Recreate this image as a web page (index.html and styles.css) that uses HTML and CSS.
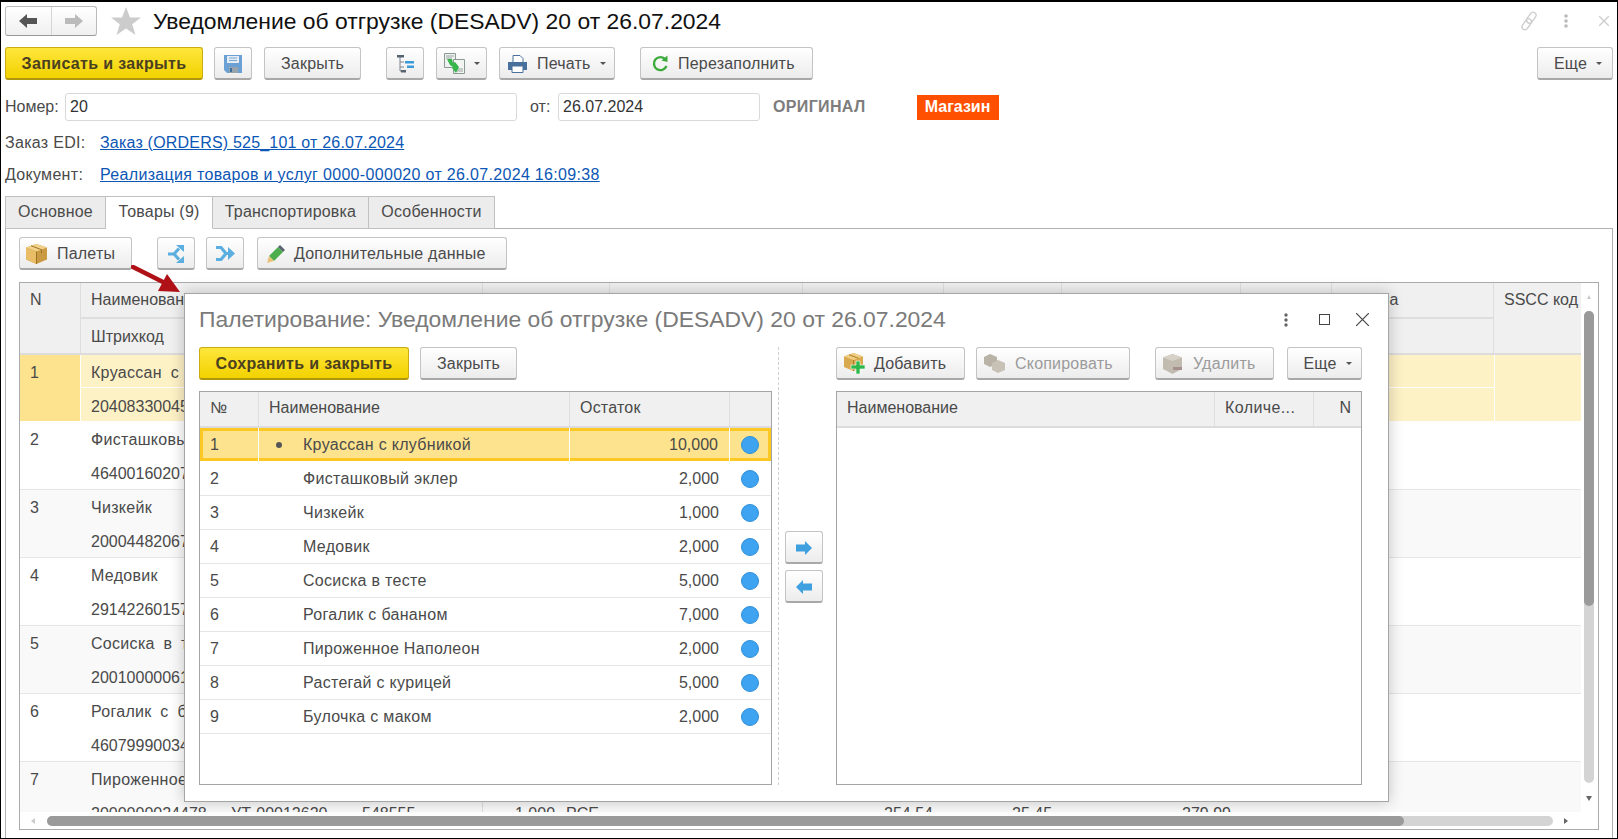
FILE: index.html
```html
<!DOCTYPE html>
<html lang="ru">
<head>
    <meta charset="UTF-8">
    <title>Уведомление об отгрузке (DESADV) 20 от 26.07.2024</title>
    <link rel="stylesheet" href="styles.css">
</head>
<body>
<div class="window">
    <div class="titlebar">
        <div class="nav">
            <div class="nav-part"><svg width="18" height="14" viewBox="0 0 18 14"><path d="M0 7 8 0v4h10v6H8v4z" fill="#555"/></svg></div>
            <div class="nav-part"><svg width="18" height="14" viewBox="0 0 18 14"><path d="M18 7 10 0v4H0v6h10v4z" fill="#bbb"/></svg></div>
        </div>
        <svg class="star" width="30" height="28" viewBox="0 0 30 28"><path d="M15 0l4 10.500h11l-8.800 6.700L24.500 28 15 21.400 5.500 28l3.300-10.800L0 10.500h11z" fill="#ccc"/></svg>
        <div class="doc-title">Уведомление об отгрузке (DESADV) 20 от 26.07.2024</div>
        <div class="win-icons">
            <svg width="20" height="20" viewBox="0 0 20 20" fill="none" stroke="#ccc" stroke-width="1.300"><rect x="-1" y="7" width="12" height="6" rx="3" transform="rotate(-55 10 10) translate(1 0)"/><rect x="9" y="7" width="12" height="6" rx="3" transform="rotate(-55 10 10) translate(-1 0)"/></svg>
            <svg class="dots" width="4" height="14" viewBox="0 0 4 14" fill="#bbb"><circle cx="2" cy="2" r="1.800"/><circle cx="2" cy="7" r="1.800"/><circle cx="2" cy="12" r="1.800"/></svg>
            <svg class="close-x" width="10" height="10" viewBox="0 0 10 10" stroke="#ccc" stroke-width="1.300"><path d="M0 0l10 10M10 0 0 10"/></svg>
        </div>
    </div>

    <div class="toolbar">
        <button class="btn btn-yellow w-write">Записать и закрыть</button>
        <button class="btn w-icon ml-11"><svg width="18" height="18" viewBox="0 0 18 18"><path d="M0 0h18v18H3l-3-3z" fill="#6aa0d4"/><path d="M3 1h12v7H3z" fill="#e4edf6"/><path d="M5 3h8M5 5.500h8" stroke="#7ba6cf"/><path d="M5 12h9v6H5z" fill="#98a3ad"/><path d="M6 13h2v4H6z" fill="#3d6f9d"/></svg></button>
        <button class="btn w-close ml-12">Закрыть</button>
        <button class="btn w-icon ml-25"><svg width="18" height="18" viewBox="0 0 18 18"><path d="M4 2v14h4M4 7h4M4 12h4" stroke="#7a8590" fill="none"/><path d="M1 0h7v2.500H1zM5 15h5v2.500H5z" fill="#56636e"/><path d="M9 6h9v2.500H9zM11 10.500h7V13h-7z" fill="#3b9ad8"/></svg></button>
        <button class="btn w-copy ml-12"><svg width="21" height="21" viewBox="0 0 21 21"><path d="M.5.5h11v14H.5z" fill="#eef1f0" stroke="#8a9a92"/><path d="M9.500 6.500h11v14h-11z" fill="#f3f5f3" stroke="#8a9a92"/><path d="M2 3h8M2 5h6M13 16h6M13 18h6" stroke="#9aa5a0"/><path d="M3 6h5l1 4 2-1 4 5-3 6-4-5 1-1-3-2z" fill="#35b54a"/></svg><span class="caret"></span></button>
        <button class="btn left w-print"><svg width="19" height="18" viewBox="0 0 19 18"><path d="M5 .5h7l3 3V8H5z" fill="#fff" stroke="#4a7199"/><path d="M0 7h19v8H0z" fill="#47719c"/><path d="M4 11h11v6.500H4z" fill="#fff" stroke="#4a7199"/></svg><span class="btn-text">Печать</span><span class="caret"></span></button>
        <button class="btn left w-refill"><svg width="16" height="18" viewBox="0 0 16 18" fill="none"><path d="M13.500 4.500A6.500 6.500 0 1 0 14.500 11" stroke="#3cab3c" stroke-width="2.400"/><path d="M9.500 5.500 15.500 7V0.500z" fill="#3cab3c"/></svg><span class="btn-text">Перезаполнить</span></button>
        <button class="btn w-more ml-auto">Еще<span class="caret"></span></button>
    </div>

    <div class="form-row">
        <label class="lbl-num">Номер:</label>
        <div class="field f-num">20</div>
        <label class="lbl-from">от:</label>
        <div class="field f-date">26.07.2024</div>
        <span class="original">ОРИГИНАЛ</span>
        <span class="shop-tag">Магазин</span>
    </div>
    <div class="link-row first"><span class="link-lbl">Заказ EDI:</span><a class="link-a" href="#">Заказ (ORDERS) 525_101 от 26.07.2024</a></div>
    <div class="link-row"><span class="link-lbl">Документ:</span><a class="link-b" href="#">Реализация товаров и услуг 0000-000020 от 26.07.2024 16:09:38</a></div>

    <div class="tabs">
        <div class="tab t1">Основное</div>
        <div class="tab t2 active">Товары (9)</div>
        <div class="tab t3">Транспортировка</div>
        <div class="tab t4">Особенности</div>
    </div>

    <div class="panel">
        <div class="toolbar inner">
            <button class="btn left w-pallets"><svg width="21" height="20" viewBox="0 0 21 20"><path d="M10.500 0 21 3.500v12L10.500 20 0 15.500v-12z" fill="#c99a42"/><path d="M10.500 0 21 3.500 10.500 7.500 0 3.500z" fill="#f2d28a"/><path d="M10.500 7.500V20L0 15.500v-12z" fill="#e8bd66"/><path d="M5 1.700 15.500 5.700v3.500M10.500 7.500V20" stroke="#9c7228" fill="none"/></svg><span class="btn-text">Палеты</span></button>
            <button class="btn w-icon ml-25"><svg width="19" height="18" viewBox="0 0 19 18" fill="none" stroke="#5aaee0" stroke-width="3.200"><path d="M1 9h6l5-5.500M7 9l5 5.500"/><path d="M9 0h8v7zM9 18h8v-7z" fill="#5aaee0" stroke="none"/></svg></button>
            <button class="btn w-icon ml-11"><svg width="19" height="17" viewBox="0 0 19 17" fill="none" stroke="#5aaee0" stroke-width="3.200"><path d="M0 2.500h5l5 6h3M0 14.500h5l5-6"/><path d="M12 2l7 6.500-7 6.500z" fill="#5aaee0" stroke="none"/></svg></button>
            <button class="btn left w-extra ml-13"><svg width="18" height="18" viewBox="0 0 18 18"><path d="M2 11 11 2l5 5-9 9z" fill="#4cae4c"/><path d="M11 2l2-2 5 5-2 2z" fill="#56636e"/><path d="M2 11l5 5-7 2z" fill="#e8c27a"/></svg><span class="btn-text tight">Дополнительные данные</span></button>
        </div>

        <div class="grid-main">
            <div class="grid-top">
                <div class="grid-content">
                    <div class="head">
                        <div class="hcell h-n">N</div>
                        <div class="head-group">
                            <div class="head-line top">
                                <div class="hcell c0">Наименование</div><div class="hcell c1"></div><div class="hcell c2"></div><div class="hcell c3"></div><div class="hcell c4"></div><div class="hcell c5"></div><div class="hcell c6"></div><div class="hcell c7">Сумма</div>
                            </div>
                            <div class="head-line"><div class="hcell">Штрихкод</div></div>
                        </div>
                        <div class="hcell h-sscc">SSCC код</div>
                    </div>

                    <div class="rows">
                        <div class="row current">
                            <div class="row-n">1</div>
                            <div class="row-lines">
                                <div class="line">Круассан с клубникой</div>
                                <div class="line">20408330045</div>
                            </div>
                            <div class="row-sscc"></div>
                        </div>
                        <div class="row">
                            <div class="row-n">2</div>
                            <div class="row-lines"><div class="line">Фисташковый эклер</div><div class="line">46400160207</div></div>
                        </div>
                        <div class="row alt">
                            <div class="row-n">3</div>
                            <div class="row-lines"><div class="line">Чизкейк</div><div class="line">20004482067</div></div>
                        </div>
                        <div class="row">
                            <div class="row-n">4</div>
                            <div class="row-lines"><div class="line">Медовик</div><div class="line">29142260157</div></div>
                        </div>
                        <div class="row alt">
                            <div class="row-n">5</div>
                            <div class="row-lines"><div class="line">Сосиска в тесте</div><div class="line">20010000061</div></div>
                        </div>
                        <div class="row">
                            <div class="row-n">6</div>
                            <div class="row-lines"><div class="line">Рогалик с бананом</div><div class="line">46079990034</div></div>
                        </div>
                        <div class="row alt">
                            <div class="row-n">7</div>
                            <div class="row-lines">
                                <div class="line">Пироженное Наполеон</div>
                                <div class="line cells">
                                    <span class="v-bar">2000000024478</span><span class="v-art">УТ-00012620</span><span class="v-code">548555</span><span class="v-qty">1,000</span><span class="v-unit">PCE</span><span class="v-price">254,54</span><span class="v-vat">25,45</span><span>279,99</span>
                                </div>
                            </div>
                        </div>
                    </div>
                </div>
                <div class="vscroll">
                    <span class="arr-up"></span>
                    <div class="vtrack"><div class="vthumb"></div></div>
                    <span class="arr-down"></span>
                </div>
            </div>
            <div class="hscroll">
                <span class="arr-left"></span>
                <div class="htrack"><div class="hthumb"></div></div>
                <span class="arr-right"></span>
            </div>
        </div>
    </div>

    <svg class="pointer" width="52" height="30" viewBox="0 0 52 30"><path d="M2 2 32 17" stroke="#b01116" stroke-width="4.500" stroke-linecap="round"/><path d="M49 27 27 26 36 9z" fill="#b01116"/></svg>

    <div class="dialog">
        <div class="dlg-head">
            <div class="dlg-title">Палетирование: Уведомление об отгрузке (DESADV) 20 от 26.07.2024</div>
            <svg class="dlg-dots" width="4" height="14" viewBox="0 0 4 14" fill="#666"><circle cx="2" cy="2" r="1.700"/><circle cx="2" cy="7" r="1.700"/><circle cx="2" cy="12" r="1.700"/></svg>
            <span class="dlg-max"></span>
            <svg class="dlg-x" width="13" height="13" viewBox="0 0 13 13" stroke="#444" stroke-width="1.200"><path d="M0 0l13 13M13 0 0 13"/></svg>
        </div>
        <div class="dlg-body">
            <div class="dlg-left">
                <div class="toolbar dlg-bar">
                    <button class="btn btn-yellow w-save">Сохранить и закрыть</button>
                    <button class="btn w-dlg-close ml-11">Закрыть</button>
                </div>
                <div class="list">
                    <div class="list-row list-head">
                        <div class="lc-n">№</div><div class="lc-name plain">Наименование</div><div class="lc-rest plain">Остаток</div><div class="lc-dot"></div>
                    </div>
                    <div class="list-row sel"><div class="lc-n">1</div><div class="lc-name"><i class="marker on"></i>Круассан с клубникой</div><div class="lc-rest">10,000</div><div class="lc-dot"><i class="dot"></i></div></div>
                    <div class="list-row"><div class="lc-n">2</div><div class="lc-name"><i class="marker"></i>Фисташковый эклер</div><div class="lc-rest">2,000</div><div class="lc-dot"><i class="dot"></i></div></div>
                    <div class="list-row"><div class="lc-n">3</div><div class="lc-name"><i class="marker"></i>Чизкейк</div><div class="lc-rest">1,000</div><div class="lc-dot"><i class="dot"></i></div></div>
                    <div class="list-row"><div class="lc-n">4</div><div class="lc-name"><i class="marker"></i>Медовик</div><div class="lc-rest">2,000</div><div class="lc-dot"><i class="dot"></i></div></div>
                    <div class="list-row"><div class="lc-n">5</div><div class="lc-name"><i class="marker"></i>Сосиска в тесте</div><div class="lc-rest">5,000</div><div class="lc-dot"><i class="dot"></i></div></div>
                    <div class="list-row"><div class="lc-n">6</div><div class="lc-name"><i class="marker"></i>Рогалик с бананом</div><div class="lc-rest">7,000</div><div class="lc-dot"><i class="dot"></i></div></div>
                    <div class="list-row"><div class="lc-n">7</div><div class="lc-name"><i class="marker"></i>Пироженное Наполеон</div><div class="lc-rest">2,000</div><div class="lc-dot"><i class="dot"></i></div></div>
                    <div class="list-row"><div class="lc-n">8</div><div class="lc-name"><i class="marker"></i>Растегай с курицей</div><div class="lc-rest">5,000</div><div class="lc-dot"><i class="dot"></i></div></div>
                    <div class="list-row"><div class="lc-n">9</div><div class="lc-name"><i class="marker"></i>Булочка с маком</div><div class="lc-rest">2,000</div><div class="lc-dot"><i class="dot"></i></div></div>
                </div>
            </div>
            <div class="dlg-divider"></div>
            <div class="dlg-arrows">
                <button class="btn w-arrow"><svg width="16" height="14" viewBox="0 0 16 14"><path d="M16 7 9 0v3.500H0v7h9V14z" fill="#3fa0e0"/></svg></button>
                <button class="btn w-arrow"><svg width="16" height="14" viewBox="0 0 16 14"><path d="M0 7l7-7v3.500h9v7H7V14z" fill="#3fa0e0"/></svg></button>
            </div>
            <div class="dlg-right">
                <div class="toolbar dlg-bar">
                    <button class="btn left w-add"><svg width="21" height="21" viewBox="0 0 21 21"><path d="M9.500 0 19 3.500V14l-9.500 4L0 14V3.500z" fill="#d8a94e"/><path d="M9.500 0 19 3.500 9.500 7 0 3.500z" fill="#f0cd80"/><path d="M9.500 7v11M5 1.700l9.500 3.600" stroke="#a87c2c" fill="none"/><path d="M12 8h4v4h5v4h-5v5h-4v-5H7v-4h5z" fill="#2fb84a" stroke="#fff" stroke-width=".6"/></svg><span class="btn-text tight">Добавить</span></button>
                    <button class="btn left w-dup off"><svg width="21" height="19" viewBox="0 0 21 19" fill="#b9b2a6"><path d="M6 0l7 3v7l-7 3-6-3V3z"/><path d="M14 6l7 3v7l-7 3-6-3V9z" fill="#c7c1b6"/></svg><span class="btn-text">Скопировать</span></button>
                    <button class="btn left w-del off"><svg width="20" height="20" viewBox="0 0 20 20"><path d="M9.500 0 19 3.500V15l-9.500 5L0 15V3.500z" fill="#c2bcb0"/><path d="M9.500 0 19 3.500 9.500 7 0 3.500z" fill="#d6d1c8"/><path d="M10 13h9v3h-9z" fill="#a58f8f"/></svg><span class="btn-text">Удалить</span></button>
                    <button class="btn w-more-dlg ml-13">Еще<span class="caret"></span></button>
                </div>
                <div class="list">
                    <div class="list-row list-head goods">
                        <div class="rc-name">Наименование</div><div class="rc-qty">Количе...</div><div class="rc-n">N</div>
                    </div>
                </div>
            </div>
        </div>
    </div>
</div>
</body>
</html>
```

FILE: styles.css
```css
* {
    box-sizing: border-box;
}

body {
    margin: 0;
    font-family: "Liberation Sans", Arial, sans-serif;
    font-size: 16px;
    color: #4a4a4a;
    background-color: #fff;
}

.window {
    position: relative;
    width: 1618px;
    height: 839px;
    padding: 0 4px;
    border: 1px solid #000;
    border-top-width: 2px;
    overflow: hidden;
}

/* title bar */
.titlebar {
    display: flex;
    align-items: center;
    height: 30px;
    margin-top: 4px;
}

.nav {
    display: flex;
    width: 92px;
    height: 30px;
    border: 1px solid #bbb;
    border-bottom-color: #999;
    border-radius: 3px;
    background: linear-gradient(#fff, #f0f0f0);
}

.nav-part {
    flex: 1;
    display: flex;
    align-items: center;
    justify-content: center;
}

.nav-part:first-child {
    border-right: 1px solid #d5d5d5;
}

.star {
    margin-left: 14px;
}

.doc-title {
    margin-left: 12px;
    font-size: 22.900px;
    color: #111;
}

.win-icons {
    display: flex;
    align-items: center;
    margin-left: auto;
    padding-right: 4px;
}

.dots {
    margin-left: 25px;
}

.close-x {
    margin-left: 31px;
}

/* buttons */
.toolbar {
    display: flex;
    height: 33px;
    margin-top: 11px;
}

.btn {
    display: flex;
    align-items: center;
    justify-content: center;
    height: 33px;
    padding: 1px 0 0;
    border: 1px solid #c4c4c4;
    border-bottom: 2px solid #a8a8a8;
    border-radius: 3px;
    background: linear-gradient(#fff, #ececec);
    font: inherit;
    letter-spacing: 0.2px;
    color: #4a4a4a;
}

.btn.left {
    justify-content: flex-start;
}

.btn-yellow {
    border-color: #c9ac10;
    border-bottom-color: #b0960c;
    background: linear-gradient(#ffe63c, #f2d200);
    font-weight: bold;
    letter-spacing: 0.35px;
    color: #4a4020;
}

.btn-text {
    margin-left: 10px;
}

.btn-text.tight {
    margin-left: 9px;
}

.off {
    color: #9b9b9b;
}

.caret {
    width: 0;
    height: 0;
    margin-left: 9px;
    border-left: 3px solid transparent;
    border-right: 3px solid transparent;
    border-top: 3px solid #555;
}

.w-write { width: 198px; }
.w-icon { width: 38px; }
.w-close { width: 97px; }
.w-copy { width: 51px; }
.w-print { width: 116px; margin-left: 12px; padding-left: 8px; }
.w-refill { width: 173px; margin-left: 25px; padding-left: 11px; }
.w-more { width: 76px; padding-left: 6px; }
.w-pallets { width: 113px; padding-left: 6px; }
.w-extra { width: 250px; padding-left: 9px; }
.w-save { width: 210px; }
.w-dlg-close { width: 97px; }
.w-arrow { width: 38px; }
.w-add { width: 129px; padding-left: 7px; }
.w-dup { width: 154px; margin-left: 11px; padding-left: 7px; }
.w-del { width: 119px; margin-left: 25px; padding-left: 7px; }
.w-more-dlg { width: 75px; padding-left: 6px; }

.ml-11 { margin-left: 11px; }
.ml-12 { margin-left: 12px; }
.ml-13 { margin-left: 13px; }
.ml-25 { margin-left: 25px; }
.ml-auto { margin-left: auto; }

/* form header */
.form-row {
    display: flex;
    align-items: center;
    height: 28px;
    margin-top: 13px;
}

.lbl-num {
    width: 60px;
}

.lbl-from {
    width: 28px;
    margin-left: 13px;
}

.field {
    height: 28px;
    padding: 0 4px;
    border: 1px solid #d9d9d9;
    border-radius: 3px;
    line-height: 26px;
    color: #333;
}

.f-num {
    width: 452px;
}

.f-date {
    width: 202px;
}

.original {
    margin-left: 13px;
    font-weight: bold;
    letter-spacing: 0.35px;
    color: #7d7d7d;
}

.shop-tag {
    display: flex;
    align-items: center;
    justify-content: center;
    width: 82px;
    height: 25px;
    margin-left: 51px;
    background-color: #ff4f00;
    font-weight: bold;
    color: #fff;
}

.link-row {
    display: flex;
    align-items: center;
    height: 32px;
    padding-top: 2px;
}

.link-row.first {
    margin-top: 5px;
}

.link-lbl {
    width: 95px;
    letter-spacing: 0.3px;
}

.link-row a {
    color: #0c57b5;
}

.link-a {
    letter-spacing: 0.2px;
}

.link-b {
    letter-spacing: 0.32px;
}

/* tabs */
.tabs {
    position: relative;
    z-index: 1;
    display: flex;
    height: 33px;
    margin-top: 6px;
}

.tab {
    display: flex;
    align-items: center;
    justify-content: center;
    padding-bottom: 2px;
    border: 1px solid #c0c0c0;
    border-left: none;
    background-color: #ececec;
    letter-spacing: 0.2px;
}

.tab.t1 {
    border-left: 1px solid #c0c0c0;
}

.tab.active {
    background-color: #fff;
    border-bottom-color: #fff;
}

.t1 { width: 101px; }
.t2 { width: 107px; }
.t3 { width: 156px; }
.t4 { width: 126px; }

/* main grid */
.panel {
    height: 620px;
    margin-top: -1px;
    padding: 8px 13px 0;
    border: 1px solid #b0b0b0;
    border-bottom: none;
}

.toolbar.inner {
    margin-top: 0;
}

.grid-main {
    display: flex;
    flex-direction: column;
    height: 548px;
    margin-top: 12px;
    border: 1px solid #ababab;
}

.grid-top {
    display: flex;
    height: 529px;
}

.grid-content {
    width: 1561px;
    overflow: hidden;
}

.head {
    display: flex;
    height: 72px;
    border-bottom: 2px solid #dcdcdc;
    background-color: #f0f0f0;
}

.hcell {
    padding: 5px 10px 0;
    white-space: nowrap;
    line-height: 24px;
}

.h-n {
    width: 61px;
    border-right: 1px solid #dedede;
}

.h-sscc {
    width: 87px;
    padding-left: 10px;
    overflow: hidden;
}

.head-group {
    width: 1413px;
    border-right: 1px solid #dedede;
}

.head-line {
    display: flex;
    height: 34px;
}

.head-line.top {
    border-bottom: 2px solid #dedede;
    height: 36px;
}

.head-line .hcell {
    padding-top: 6px;
}

.head-line.top .hcell {
    padding-top: 5px;
    border-right: 1px solid #dedede;
}

.head-line.top .hcell:last-child {
    border-right: none;
}

.c0 { width: 402px; }
.c1 { width: 127px; }
.c2 { width: 194px; }
.c3 { width: 141px; }
.c4 { width: 118px; }
.c5 { width: 179px; }
.c6 { width: 91px; }
.head-line.top .c7 { width: 161px; padding-left: 16px; }

.row {
    position: relative;
    display: flex;
    height: 68px;
    border-bottom: 1px solid #e6e6e6;
}

.row.alt {
    background-color: #f9f9f9;
}

.row-n {
    width: 61px;
    padding: 6px 10px 0;
    line-height: 24px;
}

.row-lines {
    flex: 1;
    min-width: 0;
}

.line {
    display: flex;
    height: 33px;
    padding: 7px 0 0 10px;
    line-height: 24px;
    white-space: nowrap;
}

.line:first-child {
    padding-top: 6px;
    letter-spacing: 0.3px;
    word-spacing: 4px;
}

.row.current {
    height: 67px;
    background-color: #fdf1c6;
    border-bottom-color: #fff;
}

.current .row-n {
    background-color: #fde38e;
    border-right: 1px solid #fff;
}

.current .line:first-child {
    border-bottom: 1px solid #fff;
}

.row-sscc {
    width: 87px;
    border-left: 1px solid #fff;
}

.cells {
    padding-left: 0;
}

.cells span {
    flex: none;
}

.v-bar { width: 150px; padding-left: 10px; }
.v-art { width: 131px; }
.v-code { width: 121px; border-right: 1px solid #dedede; height: 34px; }
.v-qty { width: 80px; padding-left: 32px; }
.v-unit { width: 321px; padding-left: 3px; }
.v-price { width: 128px; }
.v-vat { width: 170px; }

/* scrollbars */
.vscroll {
    display: flex;
    flex-direction: column;
    align-items: center;
    width: 17px;
    padding-top: 12px;
    padding-right: 1px;
}

.arr-up {
    border-left: 2px solid transparent;
    border-right: 2px solid transparent;
    border-bottom: 4px solid #ccc;
}

.vtrack {
    width: 10px;
    height: 472px;
    margin-top: 12px;
    border-radius: 5px;
    background-color: #d4d4d4;
}

.vthumb {
    height: 295px;
    border-radius: 5px;
    background-color: #9a9a9a;
}

.arr-down {
    margin-top: 13px;
    border-left: 3px solid transparent;
    border-right: 3px solid transparent;
    border-top: 5px solid #666;
}

.hscroll {
    display: flex;
    align-items: center;
    height: 17px;
    padding-left: 11px;
}

.arr-left {
    border-top: 3px solid transparent;
    border-bottom: 3px solid transparent;
    border-right: 4px solid #ccc;
}

.htrack {
    width: 1506px;
    height: 10px;
    margin-left: 12px;
    border-radius: 5px;
    background-color: #d4d4d4;
}

.hthumb {
    width: 1357px;
    height: 10px;
    border-radius: 5px;
    background-color: #9a9a9a;
}

.arr-right {
    margin-left: 11px;
    border-top: 3px solid transparent;
    border-bottom: 3px solid transparent;
    border-left: 4px solid #666;
}

/* red pointer from the screenshot markup */
.pointer {
    position: absolute;
    left: 130px;
    top: 263px;
}

/* dialog */
.dialog {
    position: absolute;
    left: 183px;
    top: 291px;
    display: flex;
    flex-direction: column;
    width: 1205px;
    height: 509px;
    padding: 0 0 0 14px;
    border: 1px solid #a5a5a5;
    background-color: #fff;
    box-shadow: 0 0 14px rgba(0, 0, 0, 0.22);
}

.dlg-head {
    display: flex;
    align-items: center;
    height: 53px;
    padding-bottom: 2px;
}

.dlg-title {
    flex: 1;
    font-size: 22.900px;
    color: #7a7a7a;
}

.dlg-dots {
    margin-right: 31px;
}

.dlg-max {
    width: 11px;
    height: 11px;
    margin-right: 26px;
    border: 1px solid #444;
}

.dlg-x {
    margin-right: 19px;
}

.dlg-body {
    display: flex;
    height: 438px;
}

.dlg-left {
    width: 573px;
}

.dlg-bar {
    margin: 0 0 11px;
}

.dlg-divider {
    width: 0;
    margin-left: 6px;
    border-left: 1px dashed #d0d0d0;
}

.dlg-arrows {
    display: flex;
    flex-direction: column;
    gap: 6px;
    margin-left: 6px;
    padding-top: 184px;
}

.dlg-right {
    width: 526px;
    margin-left: 13px;
}

.list {
    height: 394px;
    border: 1px solid #a5a5a5;
}

.list-row {
    display: grid;
    grid-template-columns: 59px 311px 160px 41px;
    height: 34px;
    border-bottom: 1px solid #e6e6e6;
    line-height: 33px;
    color: #4a4a4a;
}

.list-head {
    height: 36px;
    border-bottom: 2px solid #dcdcdc;
    background-color: #f0f0f0;
    line-height: 32px;
}

.list-head.goods {
    display: flex;
}

.lc-n {
    padding-left: 10px;
    border-right: 1px solid transparent;
}

.list-head .lc-n,
.list-head .lc-name,
.list-head .lc-rest {
    border-right: 1px solid #dedede;
}

.lc-name {
    display: flex;
    align-items: center;
    padding-left: 17px;
    letter-spacing: 0.3px;
}

.lc-name.plain {
    display: block;
    padding-left: 10px;
    letter-spacing: 0;
}

.lc-rest {
    padding-right: 11px;
    text-align: right;
}

.lc-rest.plain {
    padding-left: 10px;
    text-align: left;
    letter-spacing: 0.2px;
}

.lc-dot {
    display: flex;
    align-items: center;
    padding-left: 11px;
}

.marker {
    width: 6px;
    height: 6px;
    margin-right: 21px;
    border-radius: 50%;
}

.marker.on {
    background-color: #555;
}

.dot {
    width: 18px;
    height: 18px;
    border: 1px solid #2f8fd8;
    border-radius: 50%;
    background-color: #3ea3f0;
}

.list-row.sel {
    background-color: #fde38e;
    box-shadow: inset 0 0 0 3px #fcc824;
    border-bottom-color: #fff;
}

.sel .lc-n,
.sel .lc-name,
.sel .lc-rest {
    border-right: 1px solid #fff;
}

.rc-name {
    width: 378px;
    padding-left: 10px;
    border-right: 1px solid #dedede;
}

.rc-qty {
    width: 99px;
    padding-left: 10px;
    border-right: 1px solid #dedede;
    letter-spacing: 0.4px;
}

.rc-n {
    flex: 1;
    padding-right: 10px;
    text-align: right;
}
```
